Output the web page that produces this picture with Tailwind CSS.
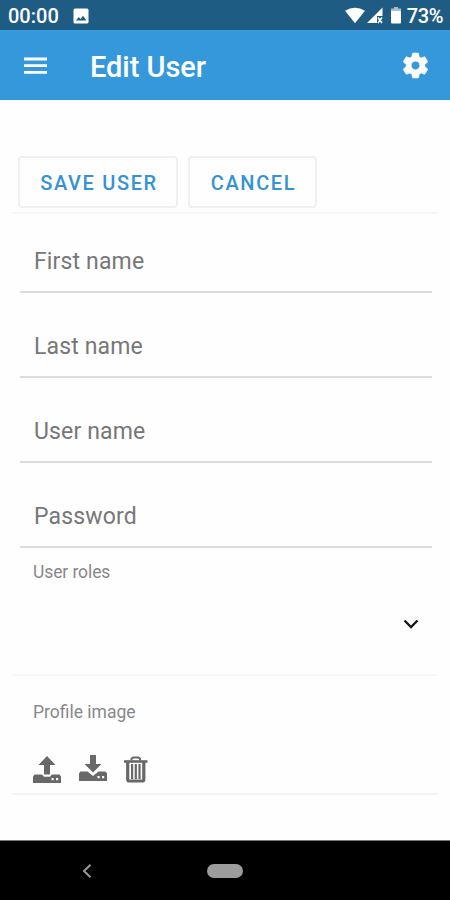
<!DOCTYPE html>
<html lang="en">
<head>
<meta charset="utf-8">
<title>Edit User</title>
<script src="https://cdn.jsdelivr.net/npm/@tailwindcss/browser@4"></script>
</head>
<body class="flex h-[900px] w-[450px] flex-col overflow-hidden bg-[#fefefe] font-[Roboto,sans-serif]">
  <!-- Status bar -->
  <div class="flex h-[30px] shrink-0 items-center bg-[#1f5c84] pt-px pr-[7px] pl-2 text-white">
    <span class="w-[65px] text-[20px] leading-[30px] font-medium">00:00</span>
    <svg class="mt-px h-4 w-4" viewBox="0 0 16 16"><path fill="#fff" fill-rule="evenodd" d="M2 .5h12A1.500 1.500 0 0 1 15.500 2v12a1.500 1.500 0 0 1-1.500 1.500H2A1.500 1.500 0 0 1 .5 14V2A1.500 1.500 0 0 1 2 .5zM3 12.500h10.500L10 7.800l-2.500 3.300L5.800 9z"/></svg>
    <div class="ml-auto flex items-center">
      <svg class="mr-[2px] h-[17px] w-5" viewBox="0 0 20 17"><path fill="#fff" d="M0 3.700Q10-2.200 20 3.700L10 16.200z"/></svg>
      <svg class="mr-[8px] h-[17px] w-4" viewBox="0 0 16 17"><path fill="#fff" d="M0 16L15.500.500V9H10v7z"/><path stroke="#fff" stroke-width="1.500" d="M11 10.500l4 5.500M15 10.500l-4 5.500"/></svg>
      <svg class="mr-[6px] h-[17px] w-[10px]" viewBox="0 0 10 17"><path fill="#a5bfd0" d="M3 0h4v1.500h3V5H0V1.500h3z"/><path fill="#fff" d="M0 4h10v11.500a1 1 0 0 1-1 1H1a1 1 0 0 1-1-1z"/></svg>
      <span class="text-[20px] leading-[30px] font-medium tracking-[-0.4px]">73%</span>
    </div>
  </div>

  <!-- App bar -->
  <header class="flex h-[70px] shrink-0 items-center bg-[#3498db] pr-[19px] pl-6 text-white">
    <svg class="h-[17px] w-[23px]" viewBox="0 0 23 17"><path stroke="#fff" stroke-width="2.800" d="M0 2h23M0 8.700h23M0 15.400h23"/></svg>
    <h1 class="ml-[43px] pt-[3px] text-[29px] leading-[34px] font-medium tracking-[-0.05px]">Edit User</h1>
    <svg class="ml-auto h-[31px] w-[31px]" viewBox="0 0 24 24"><path fill="#fff" stroke="#fff" stroke-width=".6" d="M19.140 12.940c.04-.3.060-.61.060-.94 0-.32-.02-.64-.07-.94l2.030-1.580c.18-.14.230-.41.120-.61l-1.920-3.320c-.12-.22-.37-.29-.59-.22l-2.390.96c-.5-.38-1.030-.7-1.620-.94l-.36-2.540c-.04-.24-.24-.41-.48-.41h-3.840c-.24 0-.43.170-.47.410l-.36 2.540c-.59.240-1.130.57-1.620.94l-2.390-.96c-.22-.08-.47 0-.59.220L2.740 8.870c-.12.210-.08.470.12.610l2.030 1.580c-.05.300-.09.630-.09.940s.02.640.07.940l-2.030 1.580c-.18.140-.23.410-.12.610l1.920 3.320c.12.220.37.290.59.220l2.390-.96c.5.380 1.030.7 1.620.94l.36 2.540c.05.240.24.410.48.410h3.840c.24 0 .44-.17.47-.41l.36-2.540c.59-.24 1.130-.56 1.620-.94l2.390.96c.22.080.47 0 .59-.22l1.920-3.320c.12-.22.070-.47-.12-.61l-2.010-1.580zM12 15.400c-1.870 0-3.400-1.530-3.400-3.400s1.530-3.400 3.400-3.400 3.400 1.530 3.400 3.400-1.530 3.400-3.400 3.400z"/></svg>
  </header>

  <main class="flex h-[740px] shrink-0 flex-col px-3 pt-[56px]">
    <div class="flex h-[58px] shrink-0 gap-[10px] border-b-2 border-[#f6f6f6] pl-[6px]">
      <button class="h-[52px] w-[160px] rounded-[4px] border-2 border-[#f0f0f0] pt-px pl-[2px] text-[20px] font-medium tracking-[1.650px] text-[#3592d3]">SAVE USER</button>
      <button class="h-[52px] w-[129px] rounded-[4px] border-2 border-[#f0f0f0] pt-px pl-[2px] text-[20px] font-medium tracking-[1.650px] text-[#3592d3]">CANCEL</button>
    </div>

    <div class="ml-2 flex w-[412px] flex-col text-[23px] leading-[28px] tracking-[0.150px] text-[#777]">
      <div class="h-[79px] border-b-2 border-[#dcdcdc] pt-[34px] pl-[14px]">First name</div>
      <div class="h-[85px] border-b-2 border-[#dcdcdc] pt-[40px] pl-[14px]">Last name</div>
      <div class="h-[85px] border-b-2 border-[#dcdcdc] pt-[40px] pl-[14px]">User name</div>
      <div class="h-[85px] border-b-2 border-[#dcdcdc] pt-[40px] pl-[14px]">Password</div>
    </div>

    <section class="flex h-[128px] shrink-0 flex-col border-b-2 border-[#f8f8f8] pt-[12px] pr-[19px] pl-[21px]">
      <span class="text-[17.500px] leading-6 tracking-[-0.1px] text-[#888]">User roles</span>
      <svg class="mt-[35px] h-[10px] w-4 self-end" viewBox="0 0 16 10"><path fill="none" stroke="#151515" stroke-width="2.300" d="M1.500 1.500L8 8l6.500-6.500"/></svg>
    </section>

    <section class="flex h-[119px] shrink-0 flex-col border-b-2 border-[#f5f5f5] pt-[24px] pl-[21px]">
      <span class="text-[17.500px] leading-6 text-[#888]">Profile image</span>
      <div class="mt-[31px] flex text-[#686868]">
        <svg class="mt-px h-7 w-7" viewBox="0 0 28 28"><path fill="currentColor" d="M14 0l8.500 9H17v9.500h-6V9H5.500z"/><path fill="currentColor" fill-rule="evenodd" d="M1.500 18.500H9l2 2.300h6l2-2.300h7.500L28 20.500V27H0v-6.500zM18.500 22v2.200h2.200V22zM23 22v2.200h2.200V22z"/></svg>
        <svg class="ml-[17.500px] h-7 w-7" viewBox="0 0 28 28"><path fill="currentColor" d="M11 0h6v9h5.500L14 17.500 5.500 9H11z"/><path fill="currentColor" fill-rule="evenodd" d="M1.500 16.500H8.500l5.500 4.500 5.500-4.500h7L28 18.500V26H0v-7.500zM18.500 21v2.200h2.200V21zM23 21v2.200h2.200V21z"/></svg>
        <svg class="mt-px ml-[17px] h-[27px] w-[24px]" viewBox="0 0 24 27"><path fill="none" stroke="currentColor" stroke-width="2" d="M7.500 4.500V2.800L9 1.500h5.500L16 2.800v1.700"/><path fill="none" stroke="currentColor" stroke-width="2.600" d="M0 5.500h23.500"/><path fill="none" stroke="currentColor" stroke-width="3.200" d="M3.700 6v17.500q0 1.500 1.500 1.500h13.100q1.500 0 1.500-1.500V6"/><path stroke="currentColor" stroke-width="2.200" d="M8.100 8v15M11.800 8v15M15.500 8v15"/></svg>
      </div>
    </section>
  </main>

  <!-- System navigation -->
  <nav class="flex h-[60px] shrink-0 items-center border-t border-[#777] bg-black pl-[82px]">
    <svg class="h-[14px] w-[10px]" viewBox="0 0 10 14"><path fill="none" stroke="#999" stroke-width="2" d="M8.500.8L2 7l6.500 6.200"/></svg>
    <div class="ml-[115px] h-[14px] w-[36px] rounded-full bg-[#9c9c9c]"></div>
  </nav>
</body>
</html>
